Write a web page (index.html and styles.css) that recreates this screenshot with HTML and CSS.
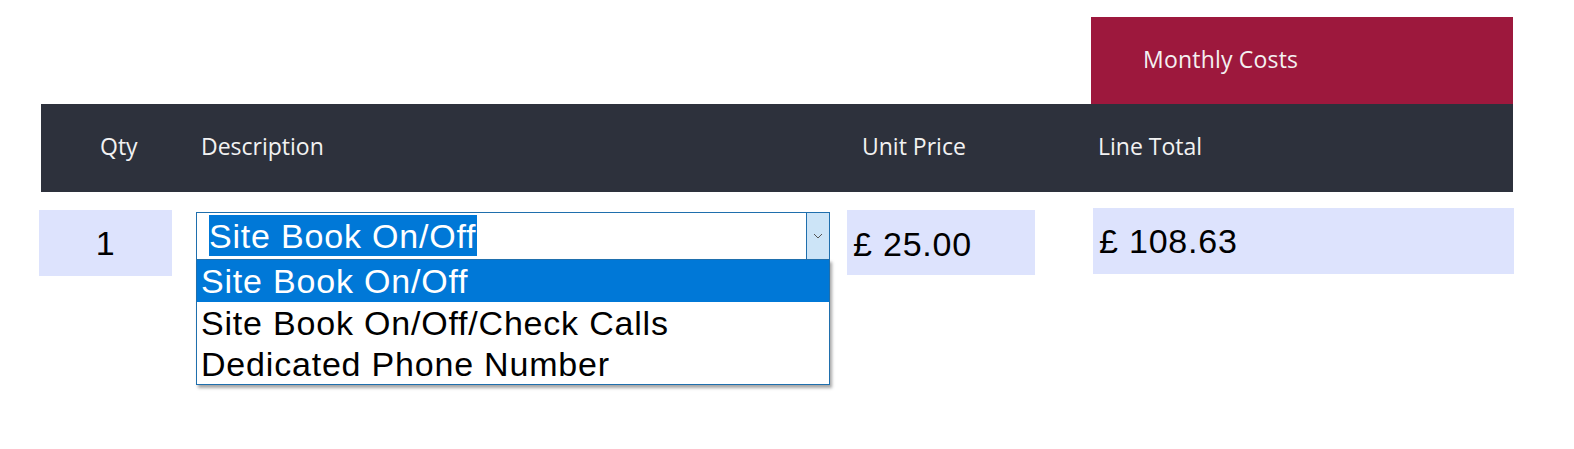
FILE: index.html
```html
<!DOCTYPE html>
<html lang="en">
<head>
<meta charset="utf-8">
<title>Monthly Costs</title>
<link rel="stylesheet" href="styles.css">
</head>
<body>
<div class="sheet">
  <div class="band"><div class="band-label">Monthly Costs</div></div>
  <div class="head">
    <div class="h h-qty">Qty</div>
    <div class="h h-desc">Description</div>
    <div class="h h-unit">Unit Price</div>
    <div class="h h-line">Line Total</div>
  </div>
  <div class="row">
    <div class="cell qty-cell">1</div>
    <div class="select-wrap">
      <div class="select">
        <span class="sel-text">Site Book On/Off</span>
        <span class="arrow"><svg width="10" height="6" viewBox="0 0 10 6"><path d="M1 1 L5 5 L9 1" fill="none" stroke="#555" stroke-width="1"/></svg></span>
      </div>
      <ul class="list">
        <li class="opt opt-active">Site Book On/Off</li>
        <li class="opt">Site Book On/Off/Check Calls</li>
        <li class="opt">Dedicated Phone Number</li>
      </ul>
    </div>
    <div class="cell unit-cell">£ 25.00</div>
    <div class="cell line-cell">£ 108.63</div>
  </div>
</div>
</body>
</html>
```

FILE: styles.css
```css
html, body {
  margin: 0;
  padding: 0;
  background: #ffffff;
}

.sheet {
  padding-top: 17px;
  width: 1574px;
  height: 449px;
  box-sizing: border-box;
  font-family: "Open Sans", "Liberation Sans", sans-serif;
}

.band {
  margin-left: 1091px;
  width: 422px;
  height: 87px;
  background: #9d183d;
  box-sizing: border-box;
  padding-left: 52px;
}

.band-label {
  color: #f4f0f1;
  font-size: 23px;
  letter-spacing: 0.2px;
  line-height: 85px;
}

.head {
  margin-left: 41px;
  width: 1472px;
  height: 88px;
  background: #2d313c;
  display: flex;
  color: #f2f2f2;
  font-size: 23px;
  line-height: 84px;
}

.h { box-sizing: border-box; white-space: nowrap; }
.h-qty { width: 160px; padding-left: 59px; }
.h-desc { width: 661px; }
.h-unit { width: 236px; }
.h-line { flex: 1; }

.row {
  display: flex;
  align-items: flex-start;
  margin-top: 16px;
  font-family: "Liberation Sans", Arial, sans-serif;
  font-size: 34px;
  letter-spacing: 0.8px;
  color: #000;
}

.cell {
  background: #dde3fd;
  box-sizing: border-box;
  white-space: nowrap;
}

.qty-cell {
  margin-left: 39px;
  margin-top: 2px;
  width: 133px;
  height: 66px;
  line-height: 66px;
  text-align: center;
}

.select-wrap {
  position: relative;
  margin-left: 24px;
  margin-top: 4px;
  width: 634px;
}

.select {
  box-sizing: border-box;
  height: 48px;
  border: 1px solid #1f6fad;
  background: #fff;
  display: flex;
  align-items: flex-start;
  padding-left: 12px;
}

.sel-text {
  margin-top: 2px;
  display: inline-block;
  height: 41px;
  line-height: 42px;
  background: #0078d7;
  color: #fff;
  padding-right: 1px;
}

.arrow {
  margin-left: auto;
  width: 23px;
  height: 46px;
  box-sizing: border-box;
  border-left: 1px solid #1f6fad;
  background: #cce4f7;
  display: flex;
  align-items: center;
  justify-content: center;
}

.list {
  position: absolute;
  top: 47px;
  left: 0;
  width: 634px;
  box-sizing: border-box;
  margin: 0;
  padding: 0;
  list-style: none;
  background: #fff;
  border: 1px solid #1f6fad;
  box-shadow: 2px 3px 3px rgba(0, 0, 0, 0.35);
}

.opt {
  height: 41px;
  line-height: 42px;
  padding-left: 4px;
  white-space: nowrap;
}

.opt-active {
  background: #0078d7;
  color: #fff;
  height: 42px;
}

.unit-cell {
  margin-left: 17px;
  margin-top: 2px;
  width: 188px;
  height: 65px;
  padding-top: 3px;
  line-height: 62px;
  padding-left: 6px;
}

.line-cell {
  margin-left: 58px;
  width: 421px;
  height: 66px;
  line-height: 66px;
  padding-left: 6px;
}
```
